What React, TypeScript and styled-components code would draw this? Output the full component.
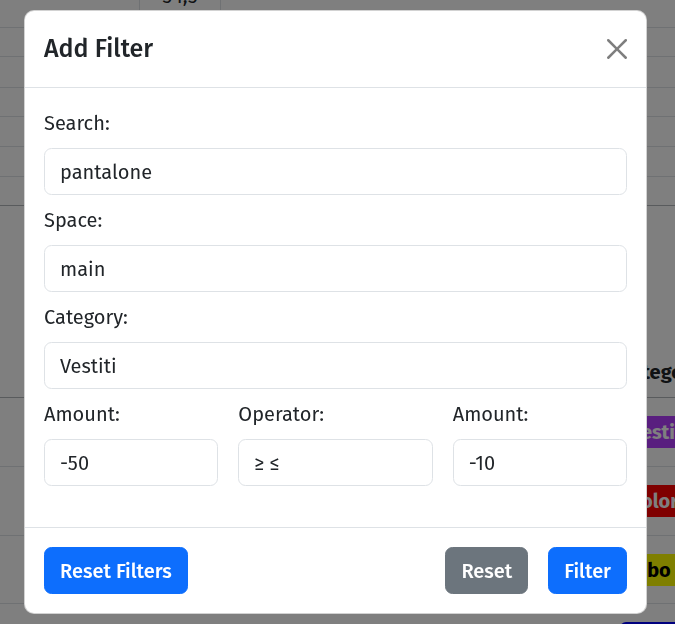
import React from "react";
import styled, { createGlobalStyle } from "styled-components";

const FONT = `"Fira Sans", "Open Sans", "Noto Sans", sans-serif`;

const GlobalStyle = createGlobalStyle`
  html, body { margin: 0; padding: 0; overflow: hidden; }
  body { font-family: ${FONT}; color: #212529; background: #ffffff; }
  *, *::before, *::after { box-sizing: border-box; }
`;

/* ---------- background page (behind the backdrop) ---------- */

const Page = styled.div`
  width: 760px;
  height: 624px;
  overflow: hidden;
  font-size: 20px;
`;

const TopTable = styled.div`
  margin-top: -30px;
  display: flex;
  flex-direction: column;
`;

const TopRow = styled.div<{ $h: number; $strong?: boolean }>`
  display: grid;
  grid-template-columns: 139px 82px 1fr;
  height: ${(p) => p.$h}px;
  border-bottom: 1px solid ${(p) => (p.$strong ? "#b3b7bb" : "#dee2e6")};
`;

const TopCell = styled.div<{ $mid?: boolean }>`
  border-left: ${(p) => (p.$mid ? "1px solid #dee2e6" : "none")};
  border-right: ${(p) => (p.$mid ? "1px solid #dee2e6" : "none")};
  text-align: center;
  padding-top: 11px;
  line-height: 30px;
`;

const DataTable = styled.div`
  margin-top: 141px;
  display: flex;
  flex-direction: column;
`;

const DataRow = styled.div<{ $h: number; $head?: boolean }>`
  display: grid;
  grid-template-columns: 612px 1fr;
  align-items: center;
  height: ${(p) => p.$h}px;
  border-bottom: 1px solid ${(p) => (p.$head ? "#b3b7bb" : "#dee2e6")};
`;

const DataCell = styled.div`
  padding: 0 8px;
`;

const HeadText = styled.span`
  font-weight: 700;
  font-size: 20px;
  line-height: 30px;
`;

const Badge = styled.span<{ $bg: string; $fg: string }>`
  display: inline-block;
  height: 32px;
  line-height: 32px;
  padding: 0 10px;
  border-radius: 6px;
  font-weight: 700;
  font-size: 20px;
  background: ${(p) => p.$bg};
  color: ${(p) => p.$fg};
`;

/* ---------- modal ---------- */

const Backdrop = styled.div`
  position: fixed;
  inset: 0;
  background: rgba(0, 0, 0, 0.5);
  display: flex;
  align-items: flex-start;
  padding: 10px 0 0 24px;
`;

const Modal = styled.div`
  width: 623px;
  background: #ffffff;
  border: 1px solid rgba(0, 0, 0, 0.175);
  border-radius: 10px;
  display: flex;
  flex-direction: column;
  overflow: hidden;
`;

const Header = styled.div`
  display: flex;
  align-items: center;
  padding: 20px 19px;
  border-bottom: 1px solid #dee2e6;
`;

const Title = styled.h5`
  margin: 0;
  font-size: 25px;
  font-weight: 500;
  line-height: 36px;
  color: #212529;
`;

const CloseButton = styled.button`
  margin-left: auto;
  width: 20px;
  height: 20px;
  padding: 0;
  border: 0;
  background: transparent;
  display: flex;
  cursor: pointer;
  opacity: 0.5;
`;

const Body = styled.div`
  padding: 20px 19px 41px;
  display: flex;
  flex-direction: column;
  gap: 10px;
`;

const Field = styled.div`
  display: flex;
  flex-direction: column;
  min-width: 0;
`;

const Label = styled.label`
  font-size: 20px;
  line-height: 30px;
  margin-bottom: 10px;
  color: #212529;
`;

const Input = styled.input`
  width: 100%;
  height: 47px;
  padding: 0 15px;
  border: 1px solid #dee2e6;
  border-radius: 7.5px;
  font-family: ${FONT};
  font-size: 20px;
  line-height: 30px;
  color: #212529;
  background: #ffffff;
  outline: none;
`;

const TripleRow = styled.div`
  display: grid;
  grid-template-columns: 174fr 194fr 174fr;
  gap: 20px;
`;

const Footer = styled.div`
  display: flex;
  align-items: center;
  gap: 20px;
  padding: 19px;
  border-top: 1px solid #dee2e6;
`;

const Button = styled.button<{ $variant: "primary" | "secondary"; $push?: boolean }>`
  height: 47px;
  padding: 0 15px;
  margin-left: ${(p) => (p.$push ? "auto" : "0")};
  border: 1px solid ${(p) => (p.$variant === "primary" ? "#0d6efd" : "#6c757d")};
  background: ${(p) => (p.$variant === "primary" ? "#0d6efd" : "#6c757d")};
  color: #ffffff;
  border-radius: 7.5px;
  font-family: ${FONT};
  font-size: 20px;
  font-weight: 500;
  line-height: 30px;
  cursor: pointer;
`;

const CloseIcon = () => (
  <svg width="20" height="20" viewBox="0 0 16 16" fill="#000">
    <path d="M.293.293a1 1 0 0 1 1.414 0L8 6.586 14.293.293a1 1 0 1 1 1.414 1.414L9.414 8l6.293 6.293a1 1 0 0 1-1.414 1.414L8 9.414l-6.293 6.293a1 1 0 0 1-1.414-1.414L6.586 8 .293 1.707a1 1 0 0 1 0-1.414z" />
  </svg>
);

const topRows = [58, 29, 31, 29, 30, 30, 29];

const badges = [
  { text: "Vestiti", bg: "#b33cff", fg: "#ffffff", h: 69 },
  { text: "Colori", bg: "#ff0000", fg: "#ffffff", h: 69 },
  { text: "Cibo", bg: "#ffff00", fg: "#000000", h: 68 },
  { text: "Casa", bg: "#0000ff", fg: "#ffffff", h: 69 },
];

export default function App() {
  return (
    <>
      <GlobalStyle />
      <Page>
        <TopTable>
          {topRows.map((h, i) => (
            <TopRow key={i} $h={h} $strong={i === topRows.length - 1}>
              <TopCell />
              <TopCell $mid>{i === 0 ? "54,5" : ""}</TopCell>
              <TopCell />
            </TopRow>
          ))}
        </TopTable>
        <DataTable>
          <DataRow $h={51} $head>
            <DataCell />
            <DataCell>
              <HeadText>Category</HeadText>
            </DataCell>
          </DataRow>
          {badges.map((b) => (
            <DataRow key={b.text} $h={b.h}>
              <DataCell />
              <DataCell>
                <Badge $bg={b.bg} $fg={b.fg}>
                  {b.text}
                </Badge>
              </DataCell>
            </DataRow>
          ))}
        </DataTable>
      </Page>

      <Backdrop>
        <Modal role="dialog" aria-label="Add Filter">
          <Header>
            <Title>Add Filter</Title>
            <CloseButton aria-label="Close">
              <CloseIcon />
            </CloseButton>
          </Header>
          <Body>
            <Field>
              <Label>Search:</Label>
              <Input defaultValue="pantalone" />
            </Field>
            <Field>
              <Label>Space:</Label>
              <Input defaultValue="main" />
            </Field>
            <Field>
              <Label>Category:</Label>
              <Input defaultValue="Vestiti" />
            </Field>
            <TripleRow>
              <Field>
                <Label>Amount:</Label>
                <Input defaultValue="-50" />
              </Field>
              <Field>
                <Label>Operator:</Label>
                <Input defaultValue="≥ ≤" />
              </Field>
              <Field>
                <Label>Amount:</Label>
                <Input defaultValue="-10" />
              </Field>
            </TripleRow>
          </Body>
          <Footer>
            <Button $variant="primary">Reset Filters</Button>
            <Button $variant="secondary" $push>
              Reset
            </Button>
            <Button $variant="primary">Filter</Button>
          </Footer>
        </Modal>
      </Backdrop>
    </>
  );
}
